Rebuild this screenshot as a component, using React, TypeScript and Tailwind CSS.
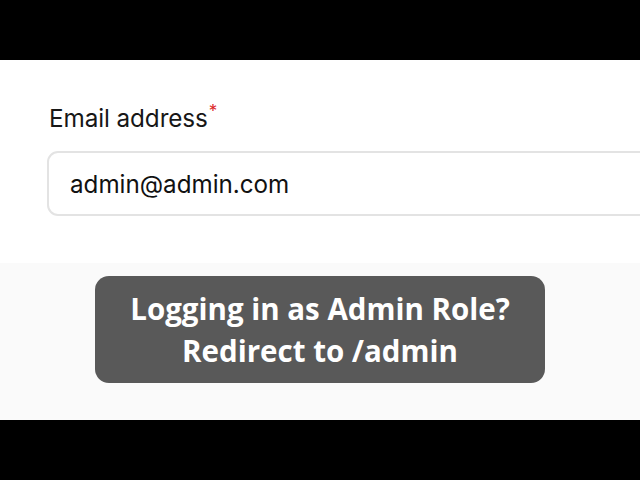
export default function App() {
  return (
    <div className="flex h-[480px] w-[640px] flex-col overflow-hidden bg-black">
      <div className="h-[60px] shrink-0 bg-black" />
      <div className="flex h-[203px] shrink-0 flex-col bg-white pl-[47px] pt-[43px] font-['Inter',sans-serif]">
        <label className="flex items-start pl-[2px] text-[24.3px] leading-[30px] tracking-[-0.1px] text-[#171717]">
          Email address
          <span className="ml-[1px] text-[17px] leading-[17px] text-[#dc2626]">*</span>
        </label>
        <div className="mt-[18px] flex h-[65px] w-[640px] items-center rounded-[11px] border-2 border-[#e3e3e3] pl-[21px] pt-[4px] text-[24.2px] text-[#111111]">
          admin@admin.com
        </div>
      </div>
      <div className="flex h-[157px] shrink-0 flex-col items-center bg-[#fafafa] pt-[13px]">
        <div className="flex h-[107px] w-[450px] flex-col items-center justify-center rounded-[14px] bg-[#595959] font-['Open_Sans',sans-serif] text-[29.5px] font-bold leading-[42px] text-white">
          <span>Logging in as Admin Role?</span>
          <span>Redirect to /admin</span>
        </div>
      </div>
      <div className="flex-1 bg-black" />
    </div>
  );
}
